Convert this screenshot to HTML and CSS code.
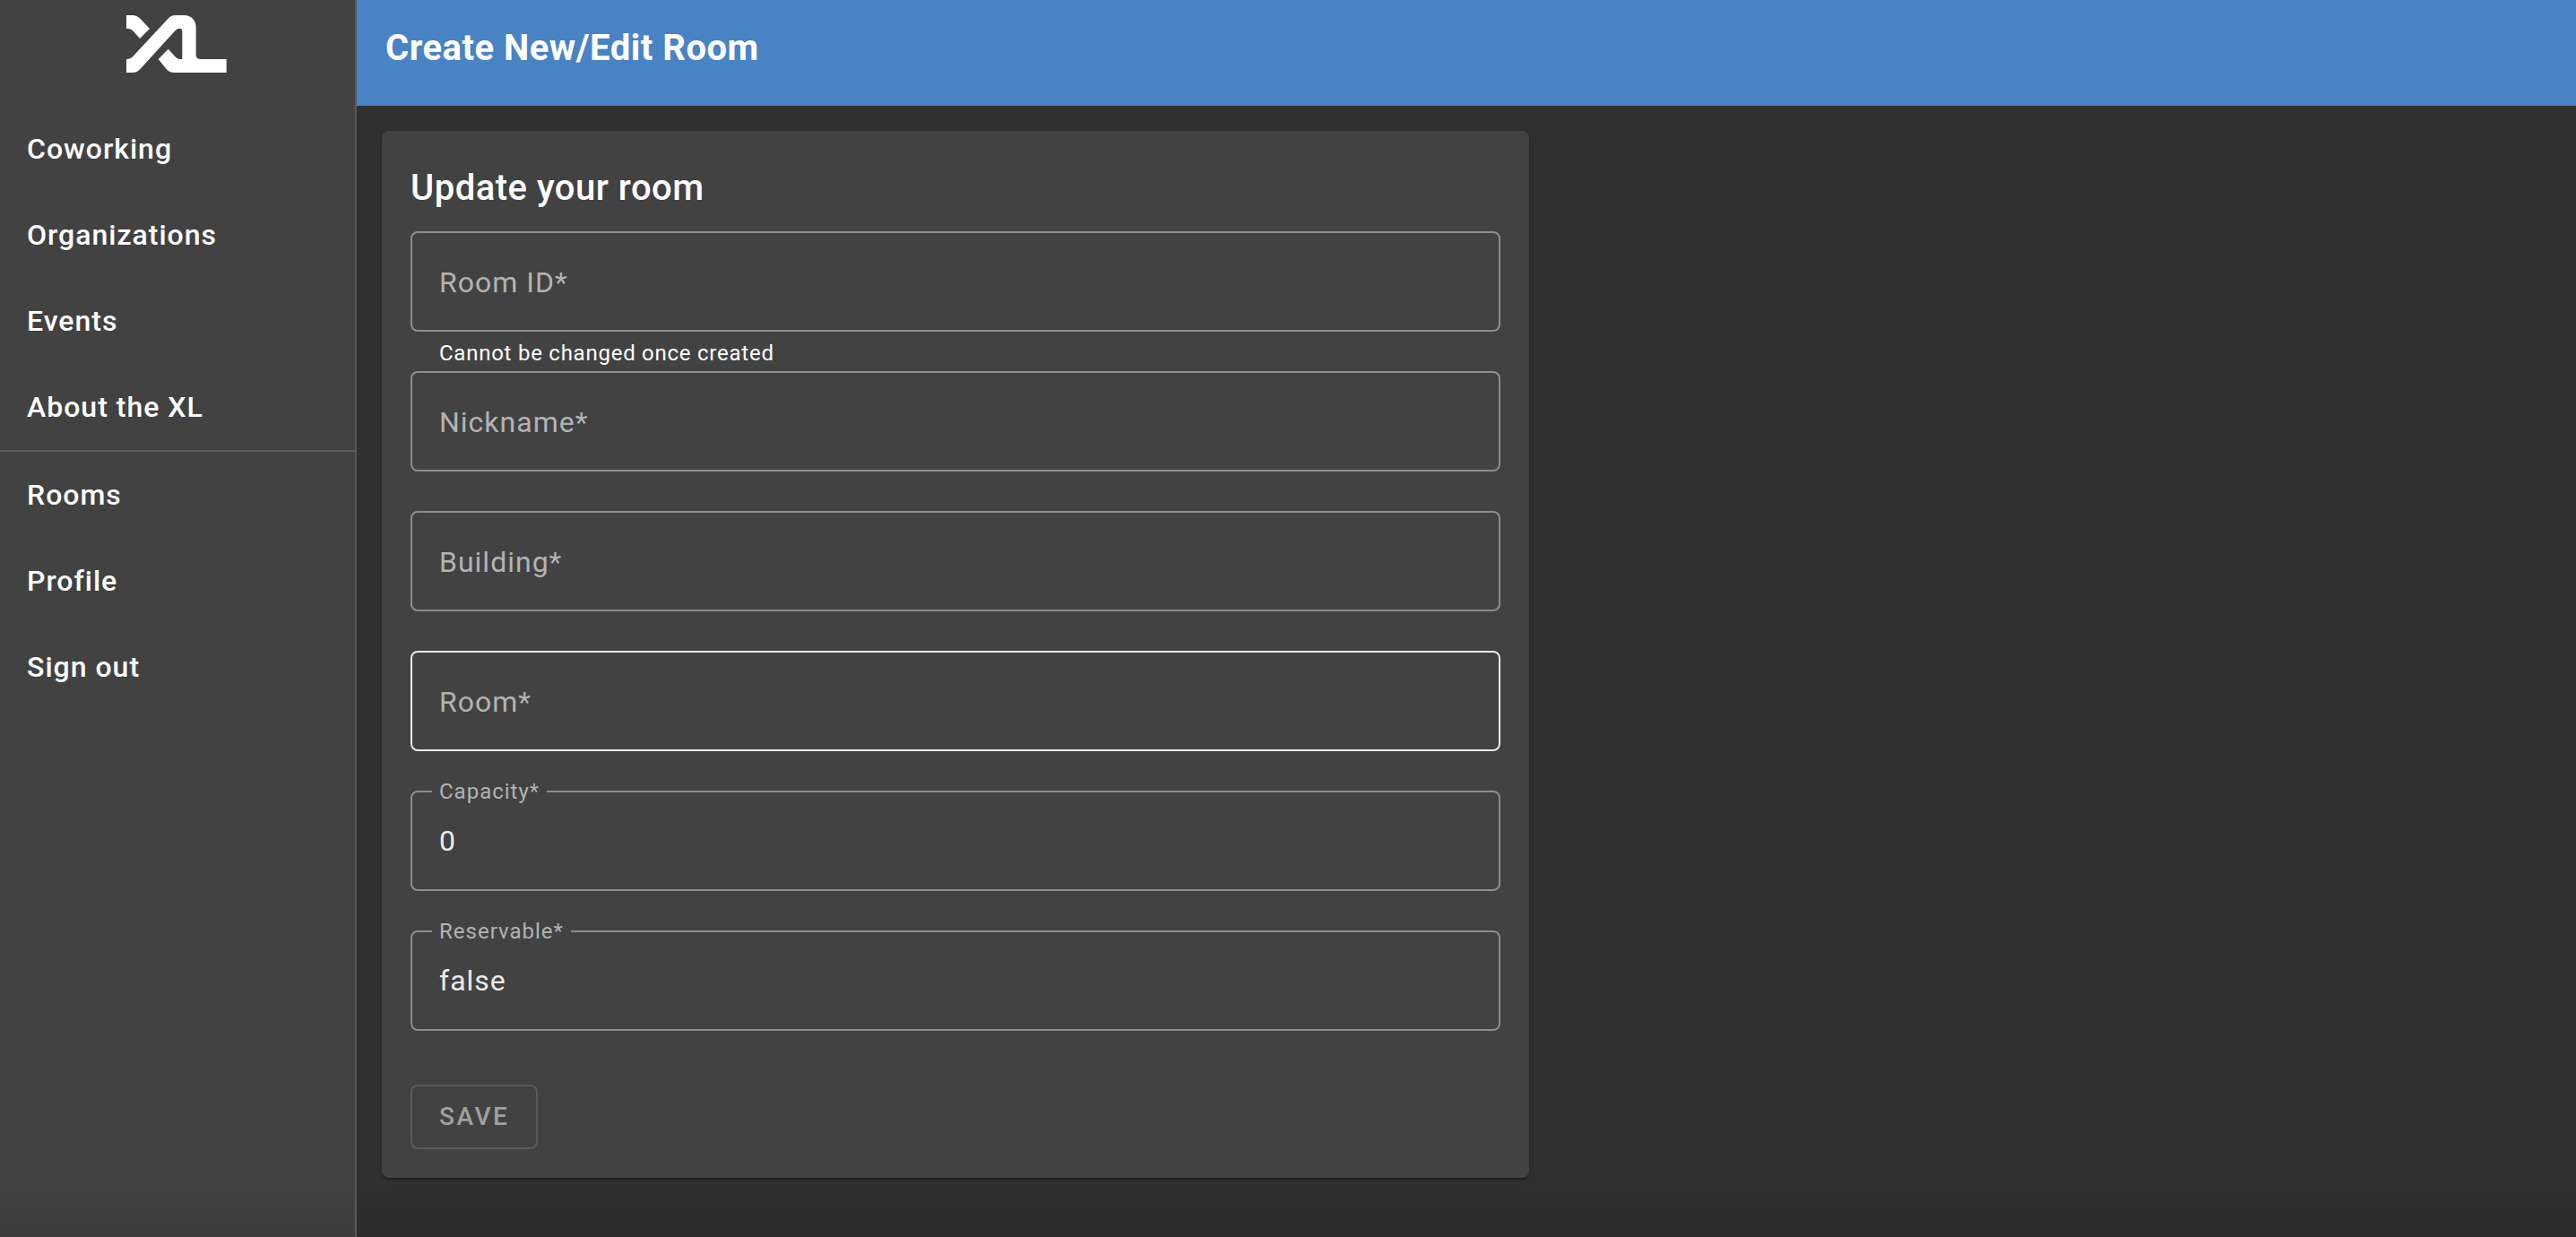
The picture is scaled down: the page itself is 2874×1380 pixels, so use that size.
FILE: index.html
```html
<!DOCTYPE html>
<html lang="en">
<head>
  <meta charset="utf-8">
  <title>Create New/Edit Room</title>
  <link rel="stylesheet" href="styles.css">
</head>
<body>
  <aside class="sidebar">
    <a class="logo" href="#" aria-label="XL home">
      <svg viewBox="0 0 336 192" width="112" height="64" fill="#fff" aria-hidden="true">
        <path d="M0 0H20C30 0 38 4 46 11L78 45L45 78L26 56C19 48 12 44 0 44Z"/>
        <path d="M0 147C10 147 15 145 21 139L137 14C146 4 153 0 165 0H193C217 0 233 17 233 40V133C233 142 238 147 247 147H335V192H160C149 192 141 188 133 179L107 147L140 113L165 140C171 146 177 147 187 147V55C187 47 184 44 178 44C173 44 169 46 164 51L47 179C39 188 31 192 20 192H0Z"/>
      </svg>
    </a>
    <nav class="nav">
      <a class="nav-item" href="#">Coworking</a>
      <a class="nav-item" href="#">Organizations</a>
      <a class="nav-item" href="#">Events</a>
      <a class="nav-item" href="#">About the XL</a>
      <hr class="divider">
      <a class="nav-item" href="#">Rooms</a>
      <a class="nav-item" href="#">Profile</a>
      <a class="nav-item" href="#">Sign out</a>
    </nav>
  </aside>
  <div class="page">
    <header class="toolbar">
      <h1 class="title">Create New/Edit Room</h1>
    </header>
    <main class="content">
      <form class="card">
        <h2 class="title card-title">Update your room</h2>
        <div class="field">
          <label class="label" for="id">Room ID*</label>
          <input class="input" id="id" type="text" aria-describedby="id-hint">
        </div>
        <p class="hint" id="id-hint">Cannot be changed once created</p>
        <div class="field">
          <label class="label" for="nickname">Nickname*</label>
          <input class="input" id="nickname" type="text">
        </div>
        <p class="hint"></p>
        <div class="field">
          <label class="label" for="building">Building*</label>
          <input class="input" id="building" type="text">
        </div>
        <p class="hint"></p>
        <div class="field field-active">
          <label class="label" for="room">Room*</label>
          <input class="input" id="room" type="text">
        </div>
        <p class="hint"></p>
        <div class="field">
          <label class="label label-floating" for="capacity">Capacity*</label>
          <input class="input" id="capacity" type="text" inputmode="numeric" value="0">
        </div>
        <p class="hint"></p>
        <div class="field">
          <label class="label label-floating" for="reservable">Reservable*</label>
          <input class="input" id="reservable" type="text" value="false">
        </div>
        <p class="hint"></p>
        <div class="actions">
          <button class="save" type="submit" disabled>SAVE</button>
        </div>
      </form>
    </main>
  </div>
</body>
</html>
```
FILE: styles.css
```css
* {
  box-sizing: border-box;
}

body {
  display: flex;
  min-height: 100vh;
  margin: 0;
  background: #303030;
  color: #fff;
  font-family: Roboto, "Liberation Sans", sans-serif;
  font-size: 32px;
  letter-spacing: 0.03125em;
}

.sidebar {
  flex: 0 0 398px;
  border-right: 2px solid #595959;
  background: linear-gradient(to top, #3d3d3d, #424242 60px);
}

.logo {
  display: flex;
  justify-content: center;
  padding: 17px 2px 37px 0;
}

.logo svg {
  display: block;
}

.nav {
  display: flex;
  flex-direction: column;
}

.nav-item {
  padding: 0 30px;
  color: #fff;
  font-weight: 500;
  line-height: 96px;
  text-decoration: none;
}

.divider {
  width: 100%;
  margin: 0;
  border: 0;
  border-top: 2px solid #595959;
}

.page {
  flex: 1;
  min-width: 0;
  background: linear-gradient(to top, #2c2c2c, #303030 60px);
}

.toolbar {
  padding: 22px 32px 32px;
  background: #4883c4;
}

.title {
  margin: 0;
  font-size: 40px;
  font-weight: 500;
  letter-spacing: 0.0125em;
  line-height: 64px;
}

.toolbar .title {
  font-weight: 700;
}

.content {
  padding: 28px;
}

.card {
  max-width: 1280px;
  padding: 32px;
  border-radius: 8px;
  background: #424242;
  box-shadow: 0 4px 2px -2px rgba(0, 0, 0, 0.2), 0 2px 2px rgba(0, 0, 0, 0.14), 0 2px 6px rgba(0, 0, 0, 0.12);
}

.card-title {
  padding-bottom: 16px;
}

.field {
  display: grid;
  height: 112px;
  border: 2px solid #8e8e8e;
  border-radius: 8px;
}

.field-active {
  border-color: #e9e9e9;
}

.label,
.input {
  grid-area: 1 / 1;
}

.label {
  z-index: 1;
  place-self: center start;
  margin-left: 30px;
  padding-top: 2px;
  color: #b3b3b3;
  line-height: 48px;
  pointer-events: none;
}

.label-floating {
  align-self: start;
  margin: -17px 0 0 22px;
  padding: 0 8px;
  background: #424242;
  font-size: 24px;
  line-height: 32px;
}

.input {
  width: 100%;
  padding: 0 30px;
  border: 0;
  outline: 0;
  background: transparent;
  color: #ececec;
  font: inherit;
  letter-spacing: inherit;
}

.hint {
  height: 44px;
  margin: 0;
  padding: 0 32px;
  font-size: 24px;
  letter-spacing: 0.03125em;
  line-height: 48px;
}

.actions {
  padding-top: 16px;
}

.save {
  display: block;
  height: 72px;
  padding: 0 30px 2px;
  border: 2px solid #5a5a5a;
  border-radius: 8px;
  background: transparent;
  color: #a0a0a0;
  font-family: inherit;
  font-size: 28px;
  font-weight: 500;
  letter-spacing: 0.09em;
}
```
